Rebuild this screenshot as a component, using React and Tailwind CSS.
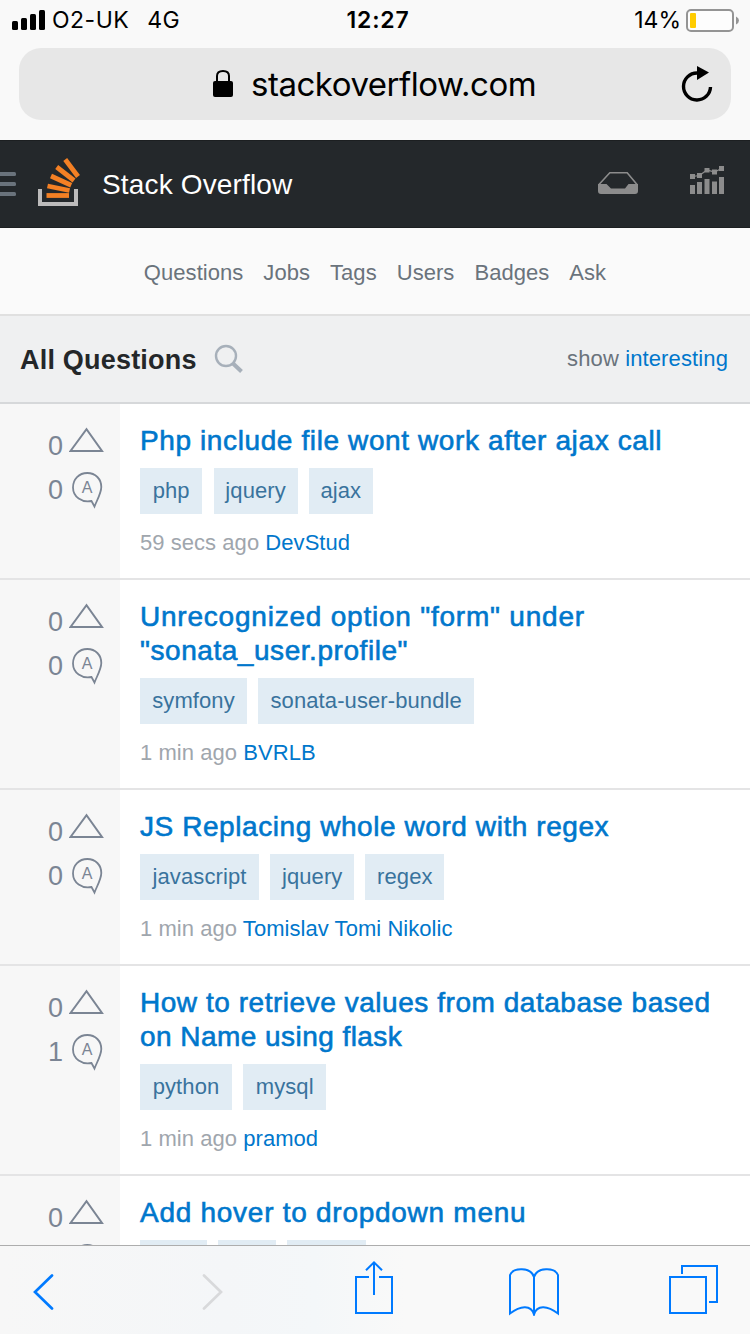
const QUESTIONS = [
  {
    title: [{ text: "Php include file wont work after ajax call", tracking: 0.61 }],
    tags: [
      { name: "php", width: 62.4 },
      { name: "jquery", width: 84 },
      { name: "ajax", width: 64 },
    ],
    when: "59 secs ago",
    user: "DevStud",
    answers: 0,
  },
  {
    title: [
      { text: 'Unrecognized option "form" under', tracking: 0.78 },
      { text: '"sonata_user.profile"', tracking: 0.55 },
    ],
    tags: [
      { name: "symfony", width: 107 },
      { name: "sonata-user-bundle", width: 216 },
    ],
    when: "1 min ago",
    user: "BVRLB",
    answers: 0,
  },
  {
    title: [{ text: "JS Replacing whole word with regex", tracking: 0.57 }],
    tags: [
      { name: "javascript", width: 119 },
      { name: "jquery", width: 84 },
      { name: "regex", width: 79 },
    ],
    when: "1 min ago",
    user: "Tomislav Tomi Nikolic",
    answers: 0,
  },
  {
    title: [
      { text: "How to retrieve values from database based", tracking: 0.54 },
      { text: "on Name using flask", tracking: 0.45 },
    ],
    tags: [
      { name: "python", width: 92 },
      { name: "mysql", width: 83 },
    ],
    when: "1 min ago",
    user: "pramod",
    answers: 1,
  },
  {
    title: [{ text: "Add hover to dropdown menu", tracking: 0.73 }],
    tags: [{ width: 67 }, { width: 58 }, { width: 79 }],
  },
];

const NAV = ["Questions", "Jobs", "Tags", "Users", "Badges", "Ask"];

function StatusBar() {
  return (
    <div className="grid h-10 grid-cols-3 items-center pl-3 pr-2.5 font-['Inter',sans-serif] text-[23px] leading-10 text-black">
      <div className="flex items-center">
        <svg className="h-5 w-[33px]" viewBox="12 10 33 20">
          <rect x="12" y="21" width="6" height="9" rx="1.5" />
          <rect x="21" y="18" width="6" height="12" rx="1.5" />
          <rect x="30" y="14" width="6" height="16" rx="1.5" />
          <rect x="39" y="10" width="6" height="20" rx="1.5" />
        </svg>
        <span className="ml-[7px] tracking-[0.5px]">O2-UK</span>
        <span className="ml-[18px] tracking-[0.5px]">4G</span>
      </div>
      <div className="pl-1 text-center font-semibold tracking-[0.8px]">12:27</div>
      <div className="flex items-center justify-end">
        <span>14%</span>
        <svg className="ml-[5px] h-6 w-[54px]" viewBox="686 8 54 24">
          <rect x="687" y="10" width="46" height="21" rx="4" fill="#fdfdfd" stroke="#949494" strokeWidth="2" />
          <rect x="690" y="13" width="6" height="15" rx="1" fill="#ffcc00" />
          <path d="M736 16.5 Q739 18 739 20.5 Q739 23 736 24.5 Z" fill="#949494" />
        </svg>
      </div>
    </div>
  );
}

function AddressBar() {
  return (
    <div className="mx-[19px] mt-2 flex h-[72px] items-center rounded-[22px] bg-[#e7e7e7] pl-[194px] pr-[18px]">
      <svg className="h-7 w-5" viewBox="213 70 20 28">
        <rect x="213" y="81" width="20" height="16" rx="2" />
        <path d="M217 82 V76 Q217 71 223 71 Q229 71 229 76 V82" fill="none" stroke="#000" strokeWidth="2" />
      </svg>
      <span className="ml-[18px] mt-0.5 whitespace-nowrap font-['Inter',sans-serif] text-[33px] tracking-[-0.48px] text-black">
        stackoverflow.com
      </span>
      <svg className="ml-auto mt-0.5 h-10 w-8" viewBox="681 65 32 40">
        <path d="M710.5 87 A13.5 13.5 0 1 1 697 73" fill="none" stroke="#000" strokeWidth="3.4" />
        <path d="M697 66 L709 72.5 L697 80 Z" />
      </svg>
    </div>
  );
}

function SiteHeader() {
  return (
    <header className="flex h-[88px] shrink-0 items-center border-y border-[#1c1f21] bg-[#24282b] pr-[26px]">
      <svg className="h-6 w-4" viewBox="0 172 16 24" fill="#6a737c">
        <rect x="-4" y="172" width="20" height="4" rx="1.5" />
        <rect x="-4" y="182" width="20" height="4" rx="1.5" />
        <rect x="-4" y="192" width="20" height="4" rx="1.5" />
      </svg>
      <svg className="ml-[22px] mt-[-4px] h-12 w-[42px]" viewBox="38 158 42 48">
        <path d="M38 189 h4 v13 h32 v-13 h4 v17 h-40 Z" fill="#bcbbbb" />
        <g stroke="#f48024" strokeWidth="4.8">
          <path d="M46.5 195.5 H69" />
          <path d="M47.5 186 L69.5 190.5" />
          <path d="M51 176 L71.2 185.2" />
          <path d="M56.7 167 L74 180.5" />
          <path d="M65.2 159.5 L78 176.5" />
        </g>
      </svg>
      <span className="ml-[22px] mt-0.5 text-[28px] tracking-[0.15px] text-white">Stack Overflow</span>
      <svg className="ml-auto mt-[-2px] h-[22px] w-10" viewBox="598 172 40 22" fill="#8c8c8c">
        <path d="M599 184.5 L609.8 172.8 H627.2 L637 184.5" fill="none" stroke="#8c8c8c" strokeWidth="1.6" />
        <path d="M598 184 H606.5 L611 188.5 H625 L628.5 184 H638 V191 Q638 194 635 194 H601 Q598 194 598 191 Z" />
      </svg>
      <svg className="ml-[52px] mt-[-8px] h-7 w-[34px]" viewBox="690 166 34 28" fill="#8c8c8c">
        <path d="M692.5 176.5 L699.5 175.5 L707 170 L714.5 172 L721.5 168.5" fill="none" stroke="#8c8c8c" strokeWidth="1.2" />
        <path d="M690 174h5v5h-5z M697 173h5v5h-5z M704.5 168h5v4.5h-5z M712 169.5h5v5h-5z M719 166h5v5h-5z" />
        <path d="M690 185h5v9h-5z M697 182h5v12h-5z M704.5 179h5v15h-5z M712 181.5h5v12.5h-5z M719 177h5v17h-5z" />
      </svg>
    </header>
  );
}

function Votes({ answers }) {
  return (
    <div className="flex w-[120px] shrink-0 flex-col bg-[#f7f7f7] pl-12 pt-5 text-[27px] text-[#7b8594]">
      <div className="flex h-11 items-center">
        <span className="w-[15px]">0</span>
        <svg className="ml-1.5 mt-[-12px] h-[26px] w-9" viewBox="69 427 36 26">
          <path d="M70.5 451 L86.5 429.2 L102 451 Z" fill="none" stroke="#7b8594" strokeWidth="2" />
        </svg>
      </div>
      <div className="flex h-11 items-center">
        <span className="w-[15px]">{answers}</span>
        <svg className="ml-[9px] h-[37px] w-8" viewBox="72 472 32 37">
          <path
            d="M91.5 501 C82 503 73 497 73 487.5 C73 479 79 473 87.3 473 C95.5 473 101.3 479 101.3 487 C101.3 493 97 500 94.5 506.5 Z"
            fill="none"
            stroke="#7b8594"
            strokeWidth="1.8"
          />
          {answers !== undefined && (
            <text x="87" y="493" textAnchor="middle" fontSize="16" fill="#7b8594">
              A
            </text>
          )}
        </svg>
      </div>
    </div>
  );
}

function Question({ question }) {
  return (
    <li className="flex shrink-0 border-b-2 border-[#e4e4e5]">
      <Votes answers={question.answers} />
      <div className="min-w-0 grow pb-[22px] pl-5 pt-5">
        <h2 className="whitespace-nowrap text-[28px] leading-[34px] text-[#0077cc] [-webkit-text-stroke:0.6px_#0077cc]">
          {question.title.map((line) => (
            <span key={line.text} className="block" style={{ letterSpacing: line.tracking }}>
              {line.text}
            </span>
          ))}
        </h2>
        <div className="mt-2.5 flex gap-[11.2px]">
          {question.tags.map((tag, i) => (
            <span
              key={i}
              className="flex h-[46px] shrink-0 items-center justify-center whitespace-nowrap bg-[#e1ecf4] pb-0.5 text-[22px] tracking-[0.1px] text-[#39739d]"
              style={{ width: tag.width }}
            >
              {tag.name}
            </span>
          ))}
        </div>
        {question.user && (
          <p className="mt-4 text-[22px] leading-[26px] tracking-[0.05px] text-[#9fa6ad]">
            {question.when} <span className="text-[#0077cc]">{question.user}</span>
          </p>
        )}
      </div>
    </li>
  );
}

function Toolbar() {
  return (
    <footer className="flex h-[89px] shrink-0 items-center border-t border-[#adadad] bg-[linear-gradient(90deg,#f7f7f7_0%,#f4f6f8_30%,#f4f7f9_42%,#f9f9f9_54%)] pl-8 pr-[31px]">
      <svg className="mt-1 h-9 w-[22px]" viewBox="32 1274 22 36" fill="none" stroke="#007aff" strokeWidth="2.7">
        <path d="M52 1275.5 L35 1292 L52 1308.5" strokeLinecap="round" />
      </svg>
      <svg className="ml-[148px] mt-1 h-9 w-[22px]" viewBox="202 1274 22 36" fill="none" stroke="#d8d9db" strokeWidth="2.7">
        <path d="M204 1275.5 L221 1292 L204 1308.5" strokeLinecap="round" />
      </svg>
      <svg className="ml-[130px] mt-[-6px] h-[54px] w-10" viewBox="354 1260 40 54" fill="none" stroke="#007aff" strokeWidth="2">
        <path d="M369 1277 H356 V1313 H392 V1277 H379" />
        <path d="M374 1295 V1262.5 M366 1270.3 L374 1262.3 L382 1270.3" />
      </svg>
      <svg className="ml-[114px] mt-0.5 h-[50px] w-[52px]" viewBox="508 1266 52 50" fill="none" stroke="#007aff" strokeWidth="2">
        <path d="M510 1313.5 V1275 C513 1267 531 1267 534 1277 C537 1267 555 1267 558 1275 V1313.5 C548 1306 537 1304 534 1314.5 C531 1304 520 1306 510 1313.5 Z" />
        <path d="M534 1277 V1314" />
      </svg>
      <svg className="ml-auto mt-[-2px] h-[50px] w-[51px]" viewBox="668 1264 51 50" fill="none" stroke="#007aff" strokeWidth="2">
        <path d="M670 1277 H706 V1313 H670 Z" />
        <path d="M682 1274 V1266 H717 V1302 H709" />
      </svg>
    </footer>
  );
}

export default function App() {
  return (
    <div className="flex h-[1334px] w-[750px] flex-col overflow-hidden bg-white font-['Liberation_Sans',sans-serif]">
      <div className="h-[140px] shrink-0 bg-[#f9f9f9]">
        <StatusBar />
        <AddressBar />
      </div>
      <SiteHeader />
      <nav className="flex h-[88px] shrink-0 items-center justify-center gap-5 border-b-2 border-[#e0e0e0] bg-[#fafafa] pt-0.5 text-[22px] tracking-[0.05px] text-[#6a737c]">
        {NAV.map((item) => (
          <a key={item}>{item}</a>
        ))}
      </nav>
      <section className="flex h-[88px] shrink-0 items-center border-b-2 border-[#d6d8da] bg-[#eff0f1] pl-5 pr-[22px]">
        <h1 className="mt-0.5 text-[27px] font-bold tracking-[0.2px] text-[#242729]">All Questions</h1>
        <svg className="ml-[17px] h-[30px] w-[30px]" viewBox="214 344 30 30" fill="none" stroke="#a7b0ba">
          <circle cx="226" cy="356" r="10" strokeWidth="2.4" />
          <path d="M233 363.5 L241.5 371.5" strokeWidth="4" />
        </svg>
        <p className="ml-auto mt-[-2px] text-[22px] tracking-[0.12px] text-[#6a737c]">
          show <span className="text-[#0077cc]">interesting</span>
        </p>
      </section>
      <ul className="flex min-h-0 grow flex-col overflow-hidden">
        {QUESTIONS.map((question) => (
          <Question key={question.title[0].text} question={question} />
        ))}
      </ul>
      <Toolbar />
    </div>
  );
}
